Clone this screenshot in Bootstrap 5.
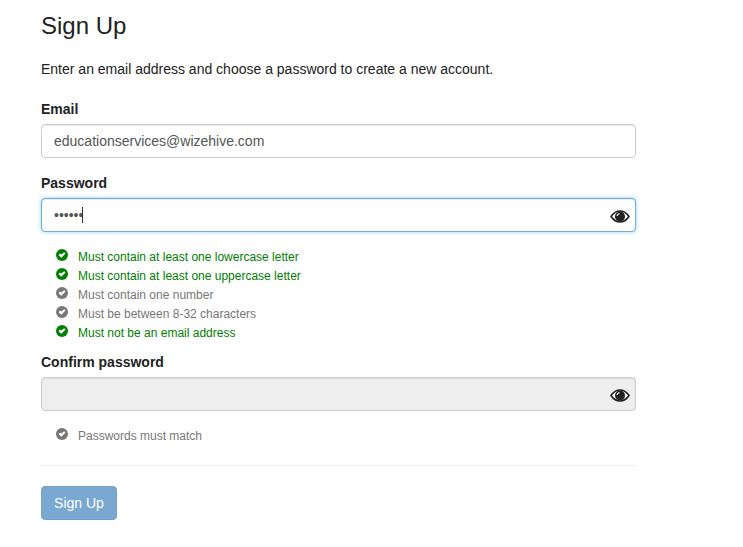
<!DOCTYPE html>
<html lang="en">

<head>
  <meta charset="UTF-8">
  <meta name="viewport" content="width=device-width, initial-scale=1.0">
  <title>Sign Up</title>
  <link href="https://cdn.jsdelivr.net/npm/bootstrap@5.3.3/dist/css/bootstrap.min.css" rel="stylesheet">
  <style>
    body {
      font-family: "Liberation Sans", Arial, sans-serif;
      font-size: 14px;
      line-height: 20px;
      color: #222;
      background: #fff;
    }
    .signup-wrap {
      width: 595px;
      margin-left: 41px;
      padding-top: 12px;
    }
    .signup-title {
      font-size: 24px;
      line-height: 28px;
      font-weight: 400;
      margin: 0 0 19px;
    }
    .signup-intro {
      margin: 0 0 20px;
    }
    .field-label {
      font-weight: 700;
      display: block;
      margin: 0 0 5px;
    }
    .field-group {
      margin-bottom: 15px;
    }
    .field-box {
      height: 34px;
      font-size: 14px;
      line-height: 20px;
      padding: 6px 12px;
      color: #555;
      border: 1px solid #ccc;
      border-radius: 4px;
      box-shadow: inset 0 1px 1px rgba(0, 0, 0, .075);
    }
    .field-box:disabled {
      background: #eee;
      opacity: 1;
    }
    .field-focus {
      border-color: #66afe9;
      box-shadow: inset 0 1px 1px rgba(0, 0, 0, .075), 0 0 4px rgba(102, 175, 233, .6);
    }
    .field-caret {
      position: absolute;
      left: 41px;
      top: 9px;
      width: 1px;
      height: 16px;
      background: #333;
    }
    .field-eye {
      position: absolute;
      right: 6px;
      top: 12px;
      width: 20px;
      height: 14px;
      color: #222;
    }
    .rule-list {
      list-style: none;
      margin: 15px 0 10px;
      padding: 0 0 0 15px;
      font-size: 12px;
      line-height: 19px;
    }
    .rule-item {
      display: flex;
      color: #777;
    }
    .rule-ok {
      color: #008000;
    }
    .rule-icon {
      width: 12px;
      height: 12px;
      margin: 2px 10px 0 0;
      flex: none;
    }
    .rule-text {
      position: relative;
      top: 1px;
    }
    .signup-rule {
      margin: 20px 0;
      border: 0;
      border-top: 1px solid #eee;
      opacity: 1;
    }
    .signup-btn {
      width: 76px;
      height: 34px;
      padding: 0;
      font-size: 14px;
      line-height: 20px;
      color: #fff;
      background: #337ab7;
      border-color: #2e6da4;
      border-radius: 4px;
      --bs-btn-disabled-bg: #337ab7;
      --bs-btn-disabled-border-color: #2e6da4;
      --bs-btn-disabled-color: #fff;
      --bs-btn-disabled-opacity: .65;
    }
  </style>
</head>

<body>
  <svg width="0" height="0" class="d-block position-absolute">
    <symbol id="check-mark" viewBox="0 0 12 12">
      <circle cx="6" cy="6" r="6" fill="currentColor"></circle>
      <path d="M2.6 6.2 L3.9 4.6 L5.3 5.6 L8.2 3.2 L9.5 4.6 L5.3 8.8 Z" fill="#fff"></path>
    </symbol>
    <symbol id="eye-mark" viewBox="0 0 20 14">
      <path d="M1 6.5 C3.5 2.8 6.5 1 10 1 C13.5 1 16.5 2.8 19 6.5 C16.5 10.2 13.5 12 10 12 C6.5 12 3.5 10.2 1 6.5 Z" fill="#fff" stroke="currentColor" stroke-width="1.6"></path>
      <circle cx="10" cy="6.5" r="5" fill="currentColor"></circle>
      <path d="M6.6 6 C6.8 4.4 8 3.3 9.6 3.1 L9.4 4.3 C8.5 4.5 8 5.1 7.8 6.1 Z" fill="#fff"></path>
    </symbol>
  </svg>

  <div class="signup-wrap">
    <h1 class="signup-title">Sign Up</h1>
    <p class="signup-intro">Enter an email address and choose a password to create a new account.</p>

    <form>
      <!-- Email -->
      <div class="field-group">
        <label class="field-label" for="emailInput">Email</label>
        <input type="email" id="emailInput" class="form-control field-box" value="educationservices@wizehive.com">
      </div>

      <!-- Password -->
      <label class="field-label" for="passwordInput">Password</label>
      <div class="position-relative">
        <input type="password" id="passwordInput" class="form-control field-box field-focus" value="abcdef">
        <span class="field-caret"></span>
        <svg class="field-eye"><use href="#eye-mark"></use></svg>
      </div>
      <ul class="rule-list">
        <li class="rule-item rule-ok"><svg class="rule-icon"><use href="#check-mark"></use></svg><span class="rule-text">Must contain at least one lowercase letter</span></li>
        <li class="rule-item rule-ok"><svg class="rule-icon"><use href="#check-mark"></use></svg><span class="rule-text">Must contain at least one uppercase letter</span></li>
        <li class="rule-item"><svg class="rule-icon"><use href="#check-mark"></use></svg><span class="rule-text">Must contain one number</span></li>
        <li class="rule-item"><svg class="rule-icon"><use href="#check-mark"></use></svg><span class="rule-text">Must be between 8-32 characters</span></li>
        <li class="rule-item rule-ok"><svg class="rule-icon"><use href="#check-mark"></use></svg><span class="rule-text">Must not be an email address</span></li>
      </ul>

      <!-- Confirm password -->
      <label class="field-label" for="confirmInput">Confirm password</label>
      <div class="position-relative">
        <input type="password" id="confirmInput" class="form-control field-box" disabled>
        <svg class="field-eye"><use href="#eye-mark"></use></svg>
      </div>
      <ul class="rule-list">
        <li class="rule-item"><svg class="rule-icon"><use href="#check-mark"></use></svg><span class="rule-text">Passwords must match</span></li>
      </ul>

      <hr class="signup-rule">

      <button type="button" class="btn btn-primary signup-btn" disabled>Sign Up</button>
    </form>
  </div>

  <script src="https://cdn.jsdelivr.net/npm/bootstrap@5.3.3/dist/js/bootstrap.bundle.min.js"></script>
</body>

</html>
